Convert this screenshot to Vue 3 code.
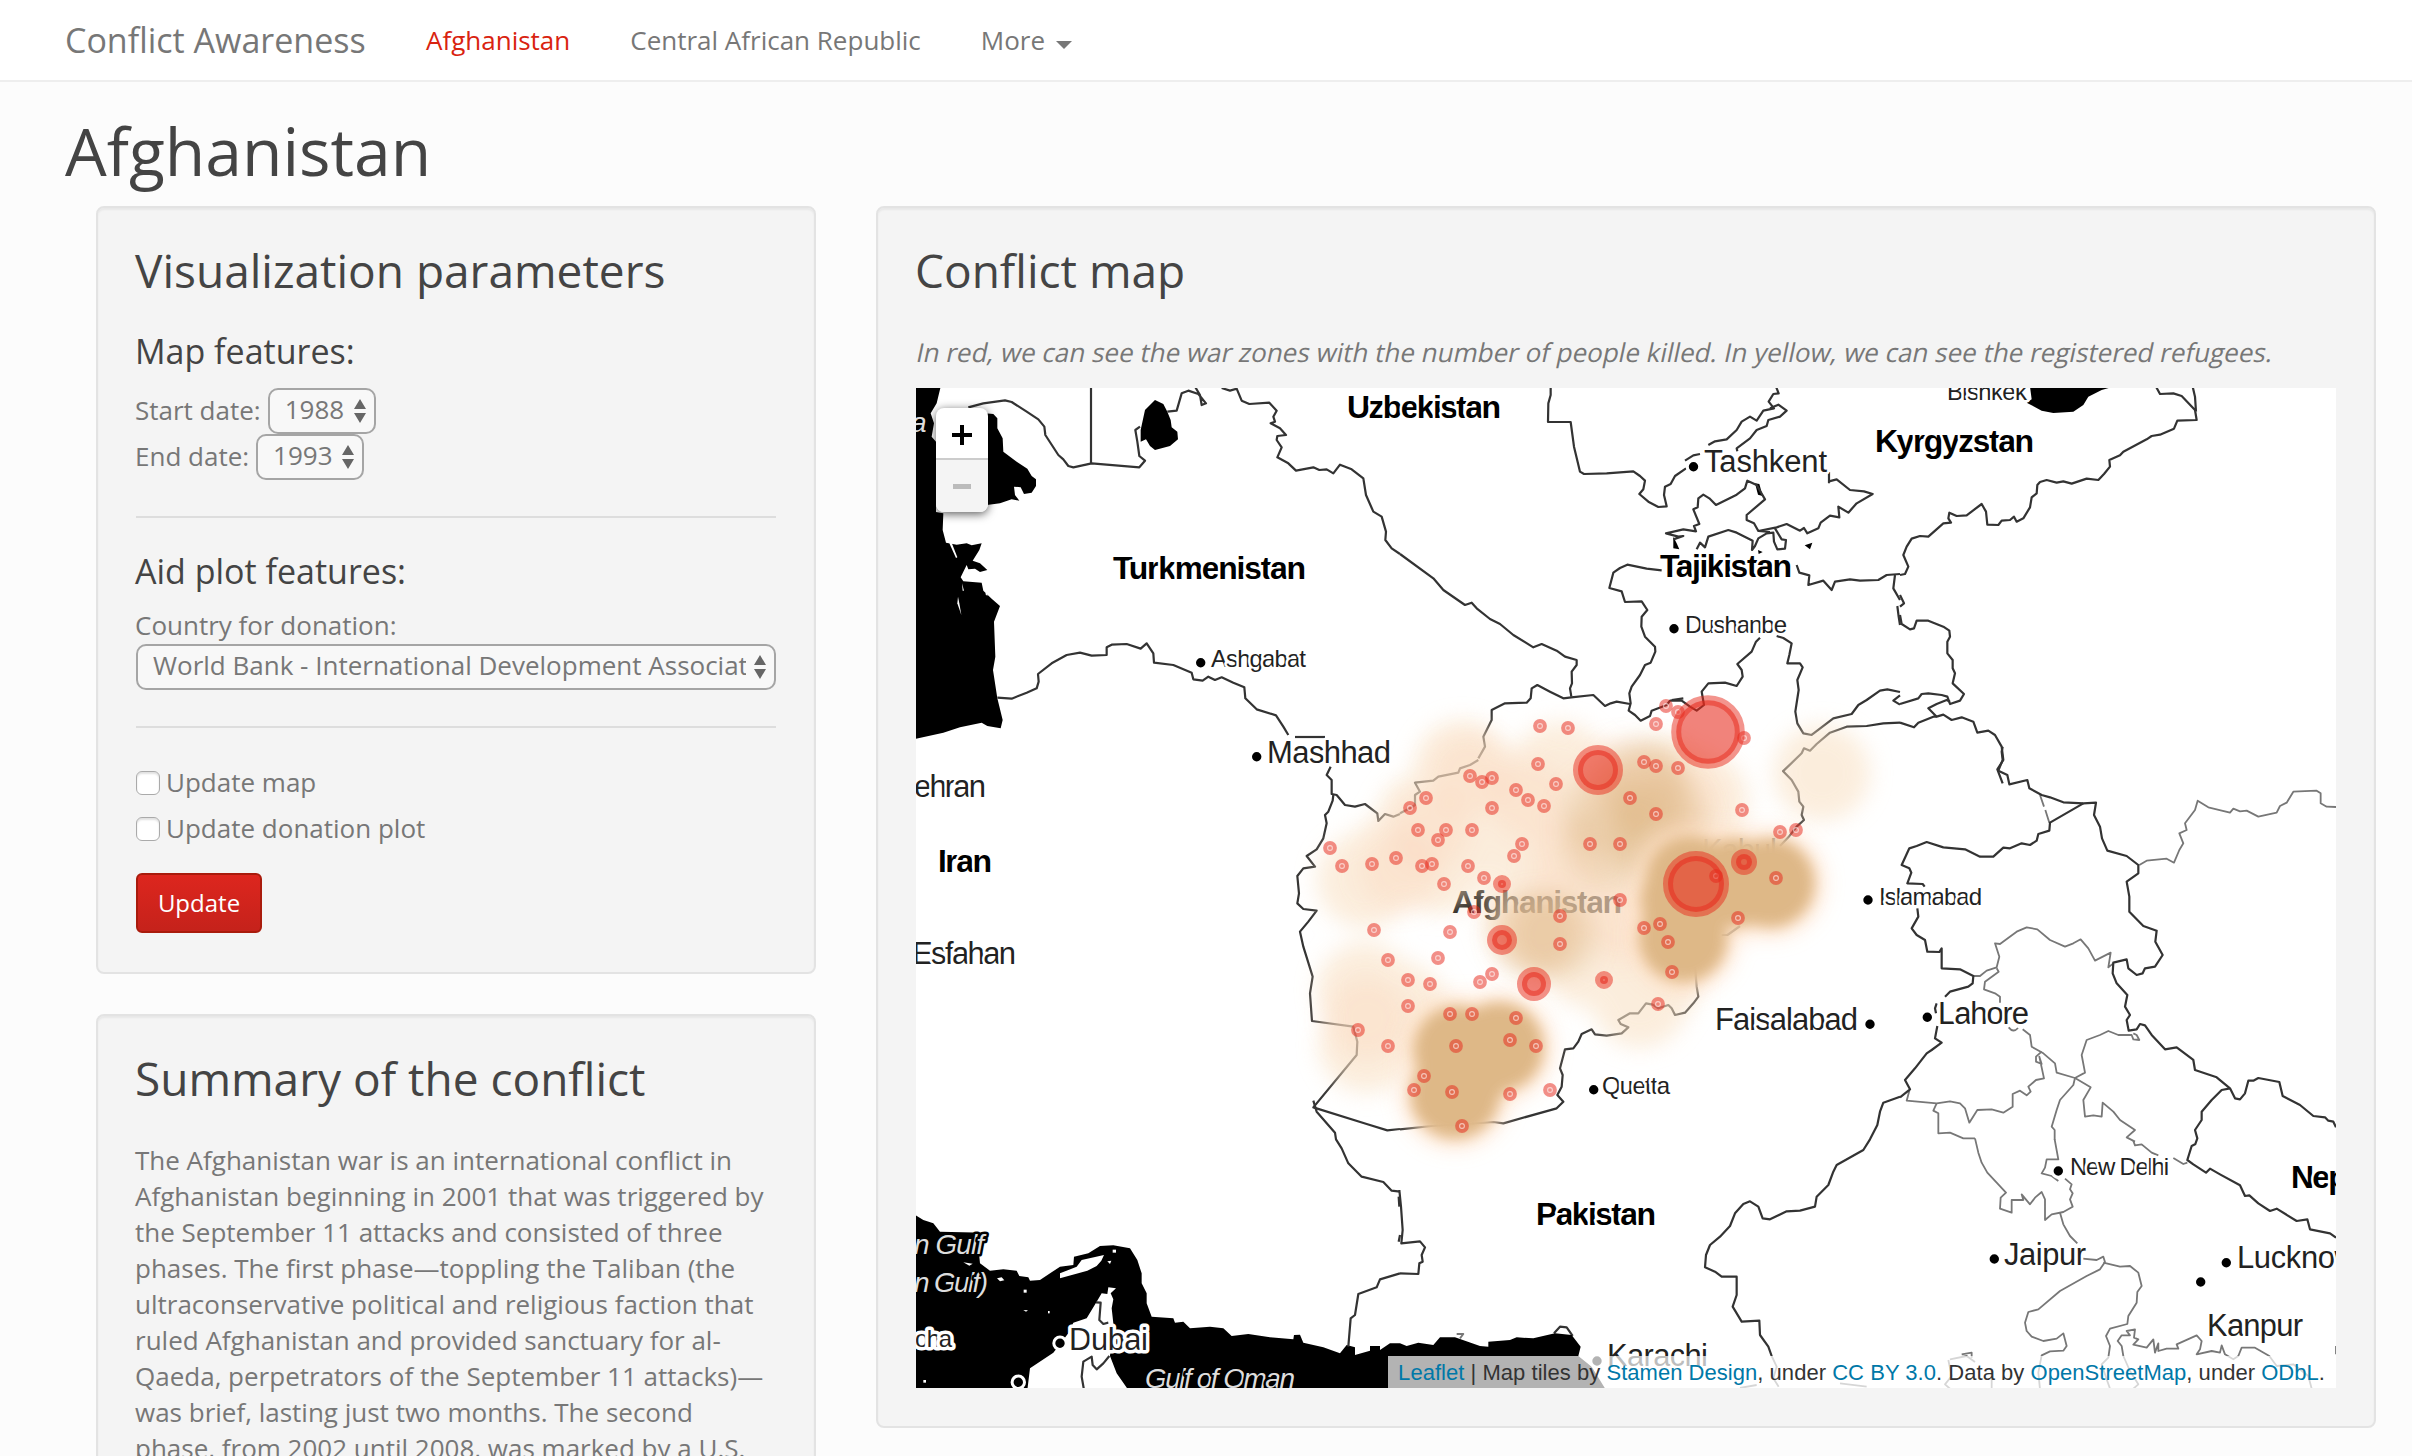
<script setup>
const navLinks = [
  { label: 'Afghanistan', active: true },
  { label: 'Central African Republic', active: false },
]

const dates = [
  { label: 'Start date:', value: '1988' },
  { label: 'End date:', value: '1993' },
]

const checks = ['Update map', 'Update donation plot']

// Each sheet is drawn at three units per pixel from its own origin.
const sheets = [
  {
    at: [900, 370],
    water: [
      'M40 50L122 50 110 100 92 130 102 160 95 200 108 215V426L130 430 128 480 138 518 170 524 200 520 215 526 245 520 238 540 218 572 240 580 262 600 240 606 225 596 205 598 200 585 182 622 190 634 245 638 250 662 275 686 300 708 282 755 286 860 279 900 292 985 308 1050 302 1075 262 1068 245 1058 180 1072 130 1088 40 1108Z',
      'M255 130L280 132 292 145 292 175 308 205 310 245 350 275 382 296 395 318 408 328 408 348 395 368 372 372 362 352 342 350 345 375 358 392 335 388 300 400 255 406Z',
      'M765 90L790 102 802 125 812 150 815 172 832 185 834 208 810 228 765 240 750 228 738 208 722 215 722 180 735 120Z',
    ],
    land: ['M155 518L172 562 168 564 148 520Z', 'M186 640L192 662H188Z', 'M174 680L172 700 184 735 178 700Z', 'M265 655L262 678 256 672Z'],
    lines: [
      'M205 112L250 100 315 91 335 96 380 125 415 148 433 170 436 195 475 255 490 268 505 288 520 292 575 280 718 292 735 272 718 258 712 215 706 180 720 170',
      'M573 50V280',
      'M802 125L830 122 845 70 865 62 895 72 918 100 905 105 900 75 885 50',
      'M965 54L990 62 1010 56 1025 92 1048 102 1108 98 1130 122 1120 140 1125 155 1112 160 1140 175 1158 195 1132 198 1130 210 1145 232 1132 262 1165 280 1188 302 1240 292 1258 300 1280 298 1300 310 1320 284 1355 298 1390 325 1398 375 1420 425 1445 440 1458 485 1456 510 1475 535 1500 552',
      'M292 983L335 986 380 968 410 955 416 935 414 912 455 880 500 855 540 848 575 857 620 855 620 832 635 824 680 822 722 836 740 820 760 850 762 878 820 885 875 908 880 928 908 932 925 920 945 930 965 922 1000 938 1033 952 1036 985 1070 1018 1128 1036 1150 1070 1165 1095',
      'M1185 1101H1275',
    ],
  },
  {
    at: [1400, 370],
    water: ['M820 500L830 520 838 538 820 535Z', 'M1065 340L1078 342 1088 378 1074 374Z', 'M1214 526L1237 518 1230 538Z', 'M1074 540L1088 546 1076 552Z'],
    lines: [
      'M0 552L100 625 130 660 195 705 215 698 230 715 270 747 300 762 340 795 400 832 425 822 470 842 495 860 530 870 530 885 515 905 516 940 510 955 514 980',
      'M452 50V75L445 100 444 156 512 156 522 230 540 305 552 312 620 310 700 304 720 318 735 332 730 358 718 372 745 395 775 411 800 409 792 375 795 350 812 342 825 318 858 295',
      'M855 272L880 256 900 252M925 225L945 214 980 208 1010 180 1025 155 1050 140 1070 152 1090 122 1122 115 1106 95 1120 72 1136 70 1128 50',
      'M1110 115L1135 104 1160 122 1140 140 1105 150 1100 168 1070 180 1050 205 1010 235 1012 244',
      'M1287 306V340M1287 334L1310 328 1350 360 1392 364 1418 372 1370 400 1345 428 1315 410 1318 442 1290 437 1262 458 1255 475 1222 490 1212 474 1200 482 1160 462 1130 472 1075 483 1062 460 1040 450 1040 435 1095 388 1070 345 1042 332 1035 355 1010 374 948 405 928 385 910 374 895 385 893 412 880 418 898 462 882 468 888 484 850 478 798 490 835 500 850 498 820 508',
      'M890 538L900 518 915 532 925 500 985 480 1010 488 1058 512 1056 540 1065 528 1075 505 1100 490 1120 488 1122 515 1132 538 1155 536 1158 510 1145 508 1125 475M1075 483L1110 486',
      'M785 601L740 596 682 584 660 594 640 608 628 654 665 664 675 696 725 694 742 720 725 740 724 770 735 800 765 830 766 845 752 878 735 885 720 915 695 950 688 970 692 1000 686 1022 705 1035 722 1052 750 1038 755 1022 800 1005 810 992 845 992 870 1010 890 1022 912 1005 905 965 925 940 975 938 1010 948 1028 920 1025 900 1012 882 1055 845 1068 815 1080 803',
      'M815 990L850 985M1130 798L1150 804 1175 820 1168 855 1162 880 1200 880 1208 892 1192 930 1196 960 1186 1025 1192 1060 1210 1090 1235 1095 1300 1045 1355 1032 1375 1005 1400 990 1440 962 1462 958 1500 966',
      'M1190 585L1198 608 1228 616 1225 645 1270 632 1295 660 1305 635 1350 628 1380 632 1435 630 1460 615 1500 612',
      'M1485 615L1480 655 1500 690M1492 708L1496 740 1500 765M1500 976L1480 992 1500 1004',
      'M235 1165L255 1130 250 1100 275 1050 275 1020 315 1000 380 998 392 985 395 955 412 945 450 965 490 985 514 982 580 975 615 1008 632 1000 650 995 690 1002',
      'M1148 1205L1205 1150 1212 1135 1230 1142 1250 1122 1290 1088 1340 1070 1400 1068 1450 1060 1500 1058',
    ],
  },
  {
    at: [1900, 370],
    water: ['M390 50H640L605 60 565 80 550 105 520 125 460 129 425 122 380 98 395 88Z'],
    lines: [
      'M768 50L780 72 820 70 845 78 885 120M878 50L885 80 888 125M885 120L890 150 832 152 822 176 780 194 755 198 740 208 670 245 660 256 628 270 630 290 612 312 595 330 560 326 515 341 490 334 470 338 440 330 420 336 412 345 410 370 395 382 390 412 370 445 350 455 342 440 330 450 305 452 295 465 262 464 258 425 245 402 200 436 170 438 148 428 145 445 153 458 130 460 85 500 60 498 35 506 20 530 10 555 25 590 15 612 0 615',
      'M0 675L12 700 0 710M0 735L5 762 30 778 42 775 50 752 85 752 130 770 148 782 150 800 142 815 142 850 158 870 158 895 165 910 158 940 192 972 180 992 150 1002 142 980 125 975 85 970 65 972 55 985 0 1002',
      'M150 995L140 990 110 1002 85 1015 110 1040 130 1034 155 1050 185 1042 220 1055 232 1088 265 1082 285 1095 305 1130 310 1170 292 1198 308 1240',
      'M0 1058L42 1072 55 1058 100 1040 110 1040',
    ],
  },
  {
    at: [900, 740],
    lines: [
      'M1292 80L1280 105 1295 120 1295 162 1310 165 1335 195 1365 200 1395 192 1432 220 1435 243 1455 222 1480 230 1500 222',
      'M1300 165L1298 182 1285 215 1275 225 1280 250 1270 295 1250 328 1220 348 1245 380 1210 385 1192 408 1197 460 1192 490 1210 507 1250 512 1225 545 1200 575 1210 620 1238 710 1230 760 1236 843 1360 860 1372 905 1370 945 1240 1102 1400 1152 1462 1171 1500 1167',
    ],
  },
  {
    at: [1400, 640],
    lines: [
      'M0 520L30 505 45 495 45 465 60 455 45 428 100 422 115 410 175 398 180 385 210 375 235 360',
      'M1148 392L1175 420 1195 455 1198 485 1210 500 1205 525 1212 540 1190 560 1165 592 1140 618M1138 675L1144 688',
      'M965 885H982L1020 858',
      'M885 980L890 1040 895 1070 880 1090 855 1118 825 1125 815 1105 805 1095 775 1105 758 1094 738 1090 715 1120 690 1120 655 1140 662 1152 685 1162 665 1180 620 1187 585 1183 575 1168 545 1182 535 1205 520 1225 495 1228 480 1285 488 1305 485 1340 472 1365 490 1385 470 1405 310 1450 280 1446 200 1452 95 1458 0 1468',
    ],
  },
  {
    at: [1900, 740],
    lines: [
      'M308 20L305 35 308 60 295 92 322 105 328 133 382 120 388 145 425 165 450 172 490 187 550 190 588 188 582 225 600 260 606 295 622 332 680 348 715 375 715 400 680 425 688 470 688 515 730 558 770 572 766 605 788 645 765 680 735 685 728 700 710 705 685 685 680 658 640 668 638 700 650 730 682 765 675 800 690 825 680 840 686 872 710 868 720 852 735 856 755 885 795 928 830 922 880 960 885 990 950 1012 990 1045 1005 1075 1020 1078 1035 1060 1045 1022 1060 1022 1075 1014 1138 1026 1148 1068 1200 1095 1240 1128 1275 1132 1285 1142 1300 1145 1308 1162',
      'M550 190L450 248 448 272 415 282 410 302 390 315 365 310 330 325 310 323 280 350 240 350 195 328 130 322 80 306 50 318 28 325 5 375 28 385 34 398 22 430 68 432 74 440',
      'M52 505L55 530 35 565 50 585 75 600 82 635 118 636 125 625 125 685 180 688 220 708 218 730 205 740 150 755 135 770',
      'M110 790L105 805 108 820M112 858L105 895 125 908 95 930 80 940 45 985 15 1020 30 1048 0 1072',
      'M990 1045L965 1050 935 1080 905 1115 905 1140 885 1170 892 1195 885 1215',
    ],
    minor: [
      'M718 375L740 362 800 356 822 368 838 330 850 310 838 280 860 270 855 250 885 210 893 182 925 202 990 218 1000 206 1020 214 1040 212 1075 230 1130 218 1140 198 1160 188 1180 155 1250 152 1262 160 1262 190 1280 200 1308 201',
      'M220 708L240 708 260 692 290 682 298 650 285 610 300 612 350 575 380 562 412 568 450 600 495 620 520 610 542 598 565 625 585 662 632 638 625 682 640 670',
      'M290 685L296 695 255 725 252 748 285 760 300 770 300 788',
      'M326 862Q340 880 354 864M368 868L390 885 395 920 430 940 465 970 470 998 525 1014 555 998 545 945 560 900 600 885 625 873 655 885 695 885 700 898 718 900 710 885 700 880',
      'M425 935L408 950 408 965 425 972 418 950 432 1015 408 1020 385 1040 392 1055 380 1066 360 1052 338 1062 338 1100 310 1118 275 1108 232 1110 208 1148 195 1105 180 1090 150 1084 110 1090 20 1082 28 1052',
      'M110 1090L100 1112 115 1120 115 1180 150 1178 190 1195 225 1195',
      'M525 1014L520 1035 480 1080 470 1110 455 1160 464 1170V1200',
      'M525 1014L572 1042 550 1080 555 1130 580 1126 605 1130 608 1088 640 1115 660 1140 705 1170 680 1192 705 1205',
      'M420 165L432 200M436 210L448 248',
    ],
  },
  {
    at: [1900, 1056],
    lines: ['M885 265L875 270 862 312 880 325 918 350 930 338 960 355 1020 388 1035 420 1048 418 1075 442 1110 465 1130 458 1190 495 1222 490 1230 520 1290 532 1308 545'],
    minor: [
      'M464 250L475 310 440 310 435 335 425 352 455 360 475 375M495 368L515 385 510 400 518 412 510 430 518 452 490 468 455 475 435 492 435 430 425 408 405 425 390 445 365 415 370 432 335 432 335 470 300 458 302 425 318 410 290 380 262 350 245 320 235 290 225 247',
      'M480 470L490 505 510 540 532 562M548 608L590 612 610 602 615 618 600 640 560 660 480 705 415 760 385 768 375 800 380 825 395 842 430 855 470 848 490 832 500 870 490 884 450 886 425 898 415 950 420 1000',
      'M610 620L660 632 690 630 715 650 725 690 712 708 710 740 685 780 682 804 630 818 618 840 630 870 625 905 605 925 620 970 630 998',
      'M700 255L705 268 725 265 755 290 775 298M820 306L850 324 862 320',
      'M670 900L665 870 653 855 665 838 690 838 680 825 705 820 702 845 715 850 700 866 740 875 760 850 765 890 775 862 775 885 800 878 835 878 830 865 890 838 905 855 900 880 890 895 935 885 960 890 965 868 975 895 1000 910 1015 900 1025 875 1065 875 1108 900 1130 930 1180 925 1225 960 1235 998',
      'M670 900L690 945 715 985 700 998',
      'M185 895L215 890 215 905M145 912L155 960 135 985 150 998M150 910L200 900 225 918M275 945V998M1308 870V895',
    ],
  },
  {
    at: [1400, 1040],
    lines: [
      'M1500 170L1450 188 1440 215 1432 255 1410 298 1390 330 1310 375 1300 395 1285 435 1250 470 1245 500 1200 512 1160 514 1110 538 1088 535 1075 500 1050 484 1030 492 1005 520 990 558 960 590 930 615 918 645 915 682 945 695 965 710 1010 710 1010 765 998 800 1025 845 1078 842 1080 885 1105 920 1115 948',
      'M-2 450L3 500 8 570 4 610 60 604 75 622 65 645 68 665 58 670 55 702 0 700',
      'M462 880L480 860 500 862 518 888',
    ],
    minor: ['M1115 948L1130 980 1120 1015 1136 1040M1070 1035L1020 1044M1320 1030L1400 1040', 'M170 882L190 882 180 895'],
  },
  {
    at: [900, 1100],
    water: [
      'M40 342L70 360 100 370 120 395 255 398 235 440 240 490 270 512 310 508 350 512 358 528 385 532 390 542 420 540 480 500 520 495 522 470 565 460 600 438 640 436 690 445 712 480 725 520 725 550 740 580 740 610 755 650 820 655 825 668 850 665 870 685 930 680 970 685 995 708 1045 702 1110 712 1180 718 1182 705 1200 704 1210 728 1270 742 1320 760 1340 735 1365 742 1365 765 1410 752 1410 738 1440 738 1440 750 1470 730 1500 730 1520 738 1555 728 1600 735 1620 712 1665 712 1740 738 1765 740 1765 725 1830 720 1850 712 1900 715 1965 700 2015 705 2042 740 2035 768 2075 800 2118 870H40Z',
    ],
    land: [
      'M382 870L390 805 460 758 505 700 520 668 560 655 590 605 605 580 622 582 625 562 648 565 632 580 640 598 635 625 640 670 630 768 650 820 685 870Z',
      'M480 520L530 500 545 480 612 465 604 482 590 498 562 512 480 535Z',
      'M190 487L218 491 208 497Z', 'M291 535L305 532 313 541 300 544Z', 'M371 569H380V578H371Z', 'M638 449H648V458H638Z', 'M622 484L634 482 630 492Z', 'M70 840H78V848H70Z', 'M370 630L384 631 378 635Z', 'M444 633H449V640H444Z',
    ],
    lines: [
      'M1240 2L1250 35 1305 98 1308 118 1325 145 1345 190 1385 230 1450 246 1475 272 1500 275',
      'M1496 290L1498 320M1500 405L1496 425',
      'M1500 520L1440 538 1430 562 1375 582 1365 645 1352 655 1345 740',
      'M588 607L602 608 598 660 610 672 625 668',
      'M552 870L545 830 550 785 575 770 578 795 590 808 610 790 628 768',
    ],
  },
]

const labels = [
  { t: 'Uzbekistan', x: 1347, y: 418, w: 154, k: 'country' },
  { t: 'Turkmenistan', x: 1113, y: 579, w: 193, k: 'country' },
  { t: 'Kyrgyzstan', x: 1875, y: 452, w: 159, k: 'country' },
  { t: 'Tajikistan', x: 1660, y: 576.5, w: 132, k: 'country' },
  { t: 'Iran', x: 938, y: 872, w: 54, k: 'country' },
  { t: 'Afghanistan', x: 1452, y: 913, w: 170, k: 'country' },
  { t: 'Pakistan', x: 1536, y: 1225, w: 120, k: 'country' },
  { t: 'Nepal', x: 2291, y: 1187.5, w: 80, k: 'country' },
  { t: 'Mashhad', x: 1267, y: 763, w: 124, k: 'city' },
  { t: 'ehran', x: 914, y: 797, w: 72, k: 'city' },
  { t: 'Esfahan', x: 912, y: 963.5, w: 104, k: 'city' },
  { t: 'Tashkent', x: 1704, y: 472, w: 123, k: 'city' },
  { t: 'Kabul', x: 1702, y: 861, w: 75, k: 'city' },
  { t: 'Faisalabad', x: 1715, y: 1030, w: 143, k: 'city' },
  { t: 'Lahore', x: 1938, y: 1024, w: 91, k: 'city' },
  { t: 'Jaipur', x: 2004, y: 1265, w: 82, k: 'city' },
  { t: 'Lucknow', x: 2237, y: 1268, w: 120, k: 'city' },
  { t: 'Kanpur', x: 2207, y: 1336, w: 96, k: 'city' },
  { t: 'Karachi', x: 1607, y: 1366, w: 101, k: 'city' },
  { t: 'Dubai', x: 1069, y: 1349.5, w: 79, k: 'city island' },
  { t: 'Ashgabat', x: 1211, y: 667, w: 95, k: 'town' },
  { t: 'Dushanbe', x: 1685, y: 633, w: 102, k: 'town' },
  { t: 'Bishkek', x: 1947, y: 400, w: 80, k: 'town' },
  { t: 'Islamabad', x: 1879, y: 904.5, w: 103, k: 'town' },
  { t: 'Quetta', x: 1602, y: 1094, w: 68, k: 'town' },
  { t: 'New Delhi', x: 2070, y: 1175, w: 99, k: 'town' },
  { t: 'oha', x: 915, y: 1347, w: 37, k: 'town island' },
  { t: 'a', x: 911, y: 432, w: 14, k: 'sea' },
  { t: 'n Gulf', x: 914, y: 1254, w: 70, k: 'sea' },
  { t: 'n Gulf)', x: 914, y: 1292, w: 74, k: 'sea' },
  { t: 'Gulf of Oman', x: 1145, y: 1388, w: 150, k: 'sea' },
]

const dots = [
  [1200.7, 662.7], [1256.7, 756.7], [1693.5, 466.7], [1674, 628.7], [1868, 900], [1870, 1024.3],
  [1927.3, 1017.3], [1593.7, 1089.7], [2058.3, 1171], [1994.3, 1259], [2226.3, 1262.7], [2200.7, 1282],
  [1597, 1361], [1060, 1343.3], [1018.3, 1382.3],
]

// Refugee density: pale, warm, medium and saturated spots.
const heat = {
  pale: [
    [1822, 773], [1365, 880], [1365, 990], [1367, 1045], [1462, 768], [1425, 820], [1455, 815], [1505, 795],
    [1395, 860], [1520, 850], [1560, 770], [1600, 800], [1670, 785], [1650, 860], [1560, 900], [1440, 865],
    [1550, 930], [1600, 910], [1590, 960], [1650, 985], [1640, 1000], [1690, 830], [1530, 920], [1480, 820],
    [1700, 800], [1550, 830], [1400, 1010],
  ],
  warm: [
    [1470, 775], [1430, 830], [1530, 800], [1570, 860], [1620, 780], [1680, 800], [1540, 925], [1620, 920], [1367, 1018], [1400, 870],
  ],
  mid: [[1640, 780], [1652, 795], [1605, 815], [1605, 845], [1650, 840], [1665, 820], [1555, 935], [1535, 935]],
  full: [[1770, 883], [1735, 883], [1690, 880], [1685, 900], [1683, 938], [1458, 1050], [1499, 1047], [1455, 1094], [1470, 1065]],
}

const clusters = [
  {
    at: [1400, 640],
    spots: [
      [420, 258], [504, 264], [768, 252], [798, 198], [834, 216], [1032, 294], [414, 372], [732, 366], [768, 378], [834, 384],
      [210, 408], [246, 426], [276, 414], [468, 432], [348, 450], [384, 480], [432, 498], [276, 504], [78, 474], [30, 504],
      [690, 474], [768, 522], [1026, 510], [1140, 576], [1188, 570], [54, 570], [138, 570], [114, 600], [216, 570], [366, 612],
      [342, 648], [570, 612], [660, 612], [66, 678], [96, 672], [-12, 654], [204, 678], [252, 714], [132, 732], [948, 708],
      [1128, 714], [660, 780], [222, 816], [480, 828], [480, 912], [150, 876], [732, 864], [780, 852], [804, 906], [1014, 834],
      [114, 954], [24, 1020], [90, 1032], [240, 1026], [276, 1002], [816, 996], [774, 1092], [24, 1098], [150, 1122], [216, 1122],
      [348, 1134],
    ],
  },
  { at: [900, 740], spots: [[1290, 324], [1326, 378], [1416, 372], [1422, 570], [1464, 660], [1374, 870], [1464, 918]] },
  { at: [1400, 1040], spots: [[168, 18], [330, 0], [408, 18], [72, 108], [42, 150], [156, 156], [330, 162], [450, 150], [186, 258]] },
]
const spots = clusters.flatMap((c) => c.spots.map(([x, y]) => [c.at[0] + x / 3, c.at[1] + y / 3]))

const zones = [
  [1708, 732, 31.8], [1598, 770, 20], [1696, 884, 28], [1744, 862, 8], [1502, 940, 10], [1534, 984, 12], [1502, 884, 4], [1604, 980, 4],
]
</script>

<template>
  <div class="page">
    <nav class="navbar">
      <a class="brand">Conflict Awareness</a>
      <a v-for="l in navLinks" :key="l.label" class="nav-link" :class="{ active: l.active }">{{ l.label }}</a>
      <a class="nav-link">More<span class="caret"></span></a>
    </nav>

    <h1>Afghanistan</h1>

    <div class="columns">
      <div class="side">
        <section class="well params">
          <h3>Visualization parameters</h3>
          <h4>Map features:</h4>
          <div v-for="d in dates" :key="d.label" class="field">
            <span>{{ d.label }}</span>
            <span class="select">
              <span class="value">{{ d.value }}</span>
              <svg class="arrows" width="12" height="24" viewBox="0 0 12 24"><path d="M0 10L6 0 12 10ZM0 14H12L6 24Z" /></svg>
            </span>
          </div>
          <hr />
          <h4>Aid plot features:</h4>
          <div class="caption">Country for donation:</div>
          <div class="select wide">
            <span class="value">World Bank - International Development Association</span>
            <svg class="arrows" width="12" height="24" viewBox="0 0 12 24"><path d="M0 10L6 0 12 10ZM0 14H12L6 24Z" /></svg>
          </div>
          <hr class="second" />
          <label v-for="c in checks" :key="c" class="check"><span class="box"></span><span class="name">{{ c }}</span></label>
          <button class="update">Update</button>
        </section>

        <section class="well summary">
          <h3>Summary of the conflict</h3>
          <p>
            The Afghanistan war is an international conflict in<br />Afghanistan beginning in 2001 that was triggered by<br />the
            September 11 attacks and consisted of three<br />phases. The first phase—toppling the Taliban (the<br />ultraconservative
            political and religious faction that<br />ruled Afghanistan and provided sanctuary for al-<br />Qaeda, perpetrators of
            the September 11 attacks)—<br />was brief, lasting just two months. The second<br />phase, from 2002 until 2008, was
            marked by a U.S.
          </p>
        </section>
      </div>

      <section class="well map-well">
        <h3>Conflict map</h3>
        <p class="legend">In red, we can see the war zones with the number of people killed. In yellow, we can see the registered refugees.</p>
        <div class="map">
          <svg class="canvas" width="1420" height="1000" viewBox="916 388 1420 1000">
            <defs>
              <filter id="soft" x="-20%" y="-20%" width="140%" height="140%"><feGaussianBlur stdDeviation="7" /></filter>
              <filter id="halo" x="-20%" y="-20%" width="140%" height="140%"><feGaussianBlur stdDeviation="11" /></filter>
            </defs>
            <g v-for="(s, i) in sheets" :key="i" :transform="`translate(${s.at[0]} ${s.at[1]}) scale(0.33333)`">
              <path v-for="d in s.water" :key="d" class="water" :d="d" />
              <path v-for="d in s.land" :key="d" class="land" :d="d" />
              <path v-for="d in s.minor" :key="d" class="minor" :d="d" />
              <path v-for="d in s.lines" :key="d" class="border" :d="d" />
            </g>
            <circle v-for="(d, i) in dots" :key="'d' + i" class="dot" :cx="d[0]" :cy="d[1]" r="6.2" />
            <text v-for="l in labels" :key="l.t + l.x" :class="l.k" :x="l.x" :y="l.y" :textLength="l.w">{{ l.t }}</text>
            <g class="pale" filter="url(#halo)">
              <circle v-for="(h, i) in heat.pale" :key="i" :cx="h[0]" :cy="h[1]" r="48" />
            </g>
            <g filter="url(#halo)">
              <circle v-for="(h, i) in heat.warm" :key="i" class="warm" :cx="h[0]" :cy="h[1]" r="40" />
            </g>
            <g filter="url(#halo)">
              <circle v-for="(h, i) in heat.mid" :key="i" class="mid" :cx="h[0]" :cy="h[1]" r="42" />
            </g>
            <g class="glow" filter="url(#halo)">
              <circle v-for="(h, i) in heat.full" :key="i" :cx="h[0]" :cy="h[1]" r="52" />
            </g>
            <g class="full" filter="url(#soft)">
              <circle v-for="(h, i) in heat.full" :key="i" :cx="h[0]" :cy="h[1]" r="44" />
            </g>
            <g v-for="(p, i) in spots" :key="'s' + i">
              <circle class="spot" :cx="p[0]" :cy="p[1]" r="6.9" />
              <circle class="ring" :cx="p[0]" :cy="p[1]" r="2.4" />
            </g>
            <circle v-for="(z, i) in zones" :key="'z' + i" class="zone" :cx="z[0]" :cy="z[1]" :r="z[2]" />
          </svg>
          <div class="zoom">
            <span class="in"><svg width="20" height="20" viewBox="0 0 20 20"><path d="M8 0h4v8h8v4h-8v8h-4v-8h-8v-4h8z" /></svg></span>
            <span class="out"><svg width="18" height="5" viewBox="0 0 18 5"><path d="M0 0h18v5h-18z" /></svg></span>
          </div>
          <div class="credit">
            <a>Leaflet</a> | Map tiles by <a>Stamen Design</a>, under <a>CC BY 3.0</a>. Data by <a>OpenStreetMap</a>, under <a>ODbL</a>.
          </div>
        </div>
      </section>
    </div>
  </div>
</template>

<style>
body {
  margin: 0;
  background: #fcfcfc;
}
</style>

<style scoped>
.page {
  height: 1456px;
  overflow: hidden;
  background: #fcfcfc;
  color: #777;
  font: 26px/36px 'Open Sans', sans-serif;
}
.page * {
  box-sizing: border-box;
}
.navbar {
  display: flex;
  height: 82px;
  padding-left: 65px;
  background: #fff;
  border-bottom: 2px solid #eee;
  line-height: 80px;
}
.brand {
  width: 331px;
  font-size: 34px;
  white-space: nowrap;
}
.nav-link {
  padding: 0 30px;
}
.nav-link.active {
  color: #d9230f;
}
.caret {
  display: inline-block;
  margin-left: 11px;
  border: 8px solid transparent;
  border-top-color: #777;
  border-bottom: 0;
  vertical-align: 1px;
}
h1,
h3,
h4 {
  margin: 0 0 0 -1px;
  color: #444;
  font-weight: 400;
}
h1 {
  padding-left: 66px;
  margin-top: 31px;
  margin-bottom: 19px;
  font-size: 66px;
  line-height: 74px;
}
.columns {
  display: flex;
  gap: 60px;
  align-items: flex-start;
  padding-left: 96px;
}
.side {
  display: flex;
  flex-direction: column;
  gap: 40px;
  width: 720px;
}
.well {
  padding: 38px;
  background: #f4f4f4;
  border: 2px solid #e3e3e3;
  border-radius: 8px;
  box-shadow: inset 0 2px 2px rgba(0, 0, 0, 0.05);
}
.params {
  height: 768px;
}
.summary {
  height: 500px;
}
.map-well {
  width: 1500px;
  height: 1222px;
}
h3 {
  margin-top: -2px;
  font-size: 46px;
  line-height: 52px;
}
h4 {
  margin-top: -2px;
  font-size: 34px;
  line-height: 38px;
}
.params h3 + h4 {
  margin-top: 36px;
  margin-bottom: 18px;
}
.field {
  display: flex;
  gap: 7px;
  height: 46px;
  margin-left: -1px;
  line-height: 44px;
}
.select {
  display: flex;
  align-items: center;
  justify-content: space-between;
  width: 108px;
  height: 46px;
  padding: 0 8px 0 15px;
  background: #f8f8f8;
  border: 2px solid #a5a5a5;
  border-radius: 10px;
}
.value {
  overflow: hidden;
  height: 42px;
  white-space: nowrap;
  line-height: 39px;
}
.arrows {
  flex: none;
  fill: #666;
}
.wide {
  width: 640px;
}
.wide .value {
  width: 593px;
}
hr {
  height: 2px;
  margin: 36px 0;
  background: #ddd;
  border: 0;
}
hr.second {
  margin-bottom: 32px;
}
.caption {
  margin: 17px 0 1px -1px;
}
.check {
  display: flex;
  gap: 6px;
  align-items: center;
  height: 46px;
  white-space: nowrap;
}
.name {
  padding-bottom: 2px;
}
.box {
  width: 24px;
  height: 24px;
  background: #fff;
  border: 1px solid #aaa;
  border-radius: 6px;
  box-shadow: inset 0 2px 2px rgba(0, 0, 0, 0.12);
}
.update {
  display: block;
  width: 126px;
  height: 60px;
  margin-top: 21px;
  padding: 0;
  color: #fff;
  background: linear-gradient(#dd261e, #c5221b);
  border: 2px solid #a91b0c;
  border-radius: 6px;
  font: 500 24px/54px 'Open Sans', sans-serif;
}
.summary p {
  margin: 38px 0 0 -1px;
  white-space: nowrap;
}
.legend {
  margin: 38px 0 18px -1px;
  white-space: nowrap;
  /* slanted roman: keeps the upright letterforms and their widths */
  transform: skewX(-12deg);
  transform-origin: 0 28px;
}
.map {
  position: relative;
  width: 1420px;
  height: 1000px;
  overflow: hidden;
  background: #fff;
}
.canvas {
  display: block;
}
.water {
  fill: #000;
}
.land {
  fill: #fff;
}
.border,
.minor {
  fill: none;
  stroke: #333;
  stroke-width: 6.6;
  stroke-linejoin: round;
}
.minor {
  stroke: #777;
  stroke-width: 5.4;
}
.dot {
  stroke: #fff;
  stroke-width: 3;
}
text {
  font-family: 'Liberation Sans', sans-serif;
  paint-order: stroke;
  stroke: #fff;
  stroke-width: 5px;
  stroke-linejoin: round;
  fill: #222;
}
.country {
  font-size: 32px;
  font-weight: 700;
  fill: #000;
}
.city {
  font-size: 31px;
}
.town {
  font-size: 24px;
}
.island {
  stroke-width: 7px;
}
.sea {
  font-size: 28px;
  font-style: italic;
  stroke: #000;
  fill: #ddd;
}
.pale {
  fill: #f9e2c6;
  opacity: 0.6;
}
.warm {
  fill: #fbd0b0;
  opacity: 0.27;
}
.mid {
  fill: #deb887;
  opacity: 0.34;
}
.glow {
  fill: #ffe0c6;
  opacity: 0.9;
}
.full {
  fill: #deb887;
}
.spot {
  fill: #e7291c;
  opacity: 0.52;
}
.ring {
  fill: none;
  stroke: #fff;
  stroke-width: 1.1;
  opacity: 0.6;
}
.zone {
  fill: #e7291c;
  fill-opacity: 0.58;
  stroke: #e7291c;
  stroke-width: 10;
  stroke-opacity: 0.5;
}
.zoom {
  position: absolute;
  top: 20px;
  left: 20px;
  width: 52px;
  border-radius: 8px;
  background: #fff;
  box-shadow: 0 2px 10px rgba(0, 0, 0, 0.65);
}
.zoom span {
  display: flex;
  align-items: center;
  justify-content: center;
  height: 52px;
}
.zoom .in {
  padding-top: 3px;
  border-bottom: 2px solid #ccc;
}
.zoom .out {
  border-radius: 0 0 8px 8px;
  background: #f4f4f4;
  fill: #bbb;
}
.credit {
  position: absolute;
  right: 0;
  bottom: 0;
  height: 32px;
  padding: 0 11px 0 10px;
  background: rgba(255, 255, 255, 0.7);
  color: #333;
  font: 22px/33px 'Liberation Sans', sans-serif;
  letter-spacing: 0.035px;
  white-space: nowrap;
}
.credit a {
  color: #0078a8;
}
</style>
